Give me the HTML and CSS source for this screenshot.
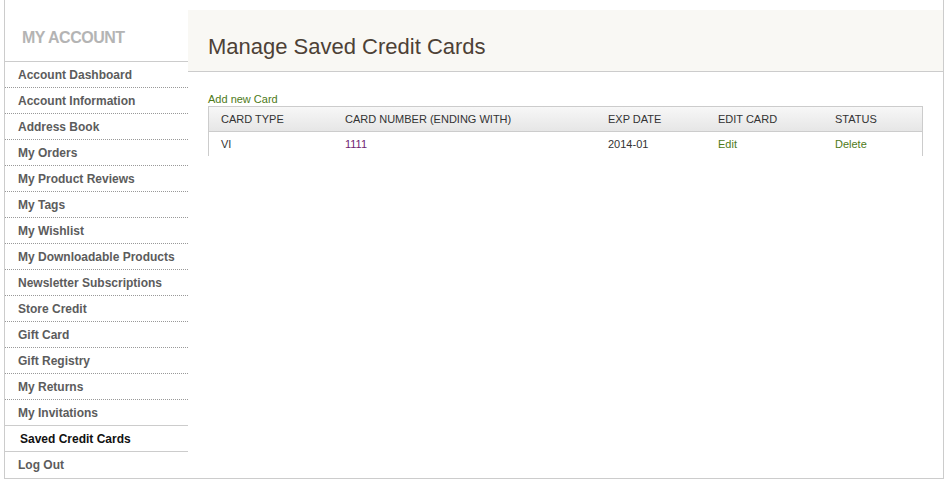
FILE: index.html
```html
<!DOCTYPE html>
<html>
<head>
<meta charset="utf-8">
<title>Manage Saved Credit Cards</title>
<link rel="stylesheet" href="styles.css">
</head>
<body>
<div class="frame">
  <aside class="sidebar">
    <div class="sb-title">MY ACCOUNT</div>
    <ul class="sb-list">
      <li class="sb-item"><a href="#">Account Dashboard</a></li>
      <li class="sb-item"><a href="#">Account Information</a></li>
      <li class="sb-item"><a href="#">Address Book</a></li>
      <li class="sb-item"><a href="#">My Orders</a></li>
      <li class="sb-item"><a href="#">My Product Reviews</a></li>
      <li class="sb-item"><a href="#">My Tags</a></li>
      <li class="sb-item"><a href="#">My Wishlist</a></li>
      <li class="sb-item"><a href="#">My Downloadable Products</a></li>
      <li class="sb-item"><a href="#">Newsletter Subscriptions</a></li>
      <li class="sb-item"><a href="#">Store Credit</a></li>
      <li class="sb-item"><a href="#">Gift Card</a></li>
      <li class="sb-item"><a href="#">Gift Registry</a></li>
      <li class="sb-item"><a href="#">My Returns</a></li>
      <li class="sb-item"><a href="#">My Invitations</a></li>
      <li class="sb-item sb-active"><span>Saved Credit Cards</span></li>
      <li class="sb-item sb-last"><a href="#">Log Out</a></li>
    </ul>
  </aside>
  <main class="main">
    <div class="page-head"><h1>Manage Saved Credit Cards</h1></div>
    <div class="content">
      <a class="add-link" href="#">Add new Card</a>
      <table class="cards">
        <thead>
          <tr>
            <th class="c1">CARD TYPE</th>
            <th class="c2">CARD NUMBER (ENDING WITH)</th>
            <th class="c3">EXP DATE</th>
            <th class="c4">EDIT CARD</th>
            <th class="c5">STATUS</th>
          </tr>
        </thead>
        <tbody>
          <tr>
            <td>VI</td>
            <td><a class="num-link" href="#">1111</a></td>
            <td>2014-01</td>
            <td><a class="act-link" href="#">Edit</a></td>
            <td><a class="act-link" href="#">Delete</a></td>
          </tr>
        </tbody>
      </table>
    </div>
  </main>
</div>
</body>
</html>
```

FILE: styles.css
```css
html, body {
  margin: 0;
  padding: 0;
  background: #fff;
}
body {
  font-family: Arial, "Liberation Sans", sans-serif;
}
.frame {
  margin-left: 4px;
  width: 940px;
  height: 479px;
  box-sizing: border-box;
  border-left: 1px solid #cccccc;
  border-right: 1px solid #cccccc;
  border-bottom: 1px solid #cccccc;
  display: flex;
}
.sidebar {
  width: 183px;
  flex: none;
}
.sb-title {
  height: 62px;
  box-sizing: border-box;
  padding: 28px 0 0 17px;
  font-size: 16px;
  line-height: 20px;
  font-weight: bold;
  color: #b4b4b4;
  letter-spacing: -0.5px;
  border-bottom: 1px solid #cccccc;
}
.sb-list {
  list-style: none;
  margin: 0;
  padding: 0;
}
.sb-item {
  height: 23px;
  padding-top: 2px;
  line-height: 23px;
  border-bottom: 1px dotted #999999;
  padding-left: 13px;
  font-size: 12px;
  font-weight: bold;
}
.sb-item a {
  color: #5c5c5c;
  text-decoration: none;
}
.sb-active {
  margin-top: -1px;
  border-top: 1px solid #cccccc;
  border-bottom: 1px solid #cccccc;
  padding-left: 15px;
  color: #111111;
}
.sb-last {
  border-bottom: none;
}
.main {
  flex: 1;
  padding-top: 10px;
}
.page-head {
  height: 62px;
  box-sizing: border-box;
  background: #f9f8f4;
  border-bottom: 1px solid #cccccc;
  padding: 24px 0 0 20px;
}
.page-head h1 {
  margin: 0;
  font-size: 22px;
  line-height: 26px;
  font-weight: normal;
  color: #4d4136;
}
.content {
  padding: 21px 20px 0 20px;
}
.add-link {
  display: block;
  font-size: 11px;
  line-height: 13px;
  color: #4e7a18;
  text-decoration: none;
}
.cards {
  width: 715px;
  border-collapse: separate;
  border-spacing: 0;
  border: 1px solid #cccccc;
  border-bottom: none;
  font-size: 11px;
  color: #333333;
}
.cards th {
  height: 24px;
  padding: 0 0 0 12px;
  text-align: left;
  font-weight: normal;
  color: #333333;
  background: linear-gradient(#f7f7f7, #e6e6e6);
  border-bottom: 1px solid #cccccc;
  line-height: 24px;
}
.cards td {
  height: 24px;
  padding: 0 0 0 12px;
  line-height: 24px;
}
.c1 { width: 112px; }
.c2 { width: 251px; }
.c3 { width: 98px; }
.c4 { width: 105px; }
.c5 { width: auto; }
.num-link {
  color: #6f2472;
  text-decoration: none;
}
.act-link {
  color: #4e7a18;
  text-decoration: none;
}
```
